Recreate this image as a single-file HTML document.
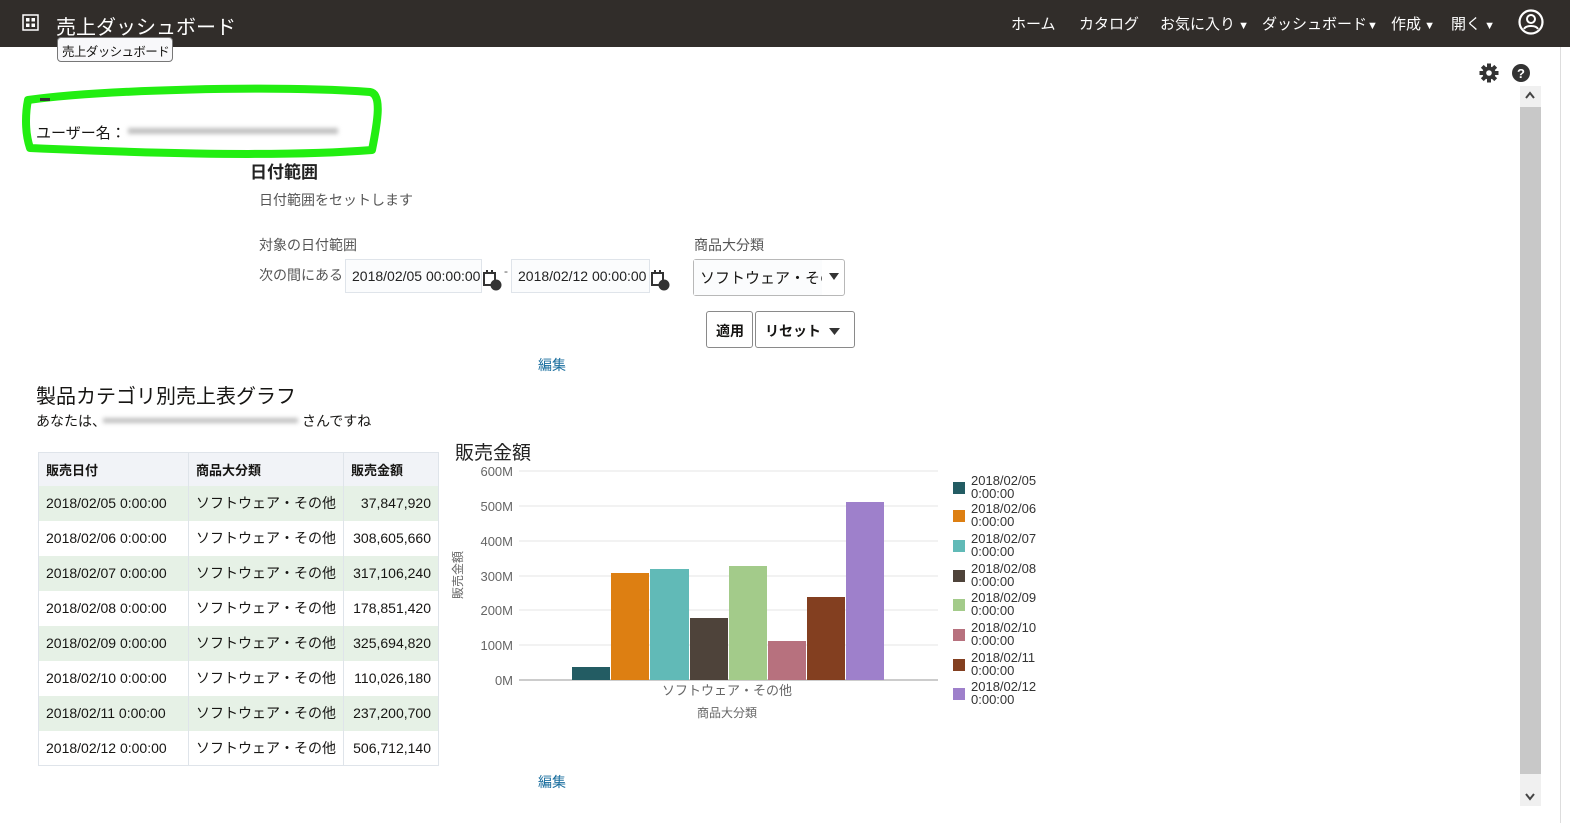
<!DOCTYPE html>
<html><head><meta charset="utf-8"><style>
*{margin:0;padding:0;box-sizing:border-box}
body{width:1570px;height:823px;background:#fff;position:relative;overflow:hidden;font-family:"Liberation Sans","Noto Sans CJK JP",sans-serif;color:#161513}
.a{position:absolute;white-space:nowrap}
.hdr{left:0;top:0;width:1570px;height:47px;background:#312d2a}
.nav{color:#fff;font-size:15px;top:13px}
.lbl{font-size:14px;color:#555}
.inp{border:1px solid #dfe4ea;background:#fbfcfd;height:34px;font-size:14px;padding:8px 6px;overflow:hidden;color:#222}
table{border-collapse:collapse;font-size:14px}
td,th{height:35px;padding:0 7px;border-right:1px solid #dfe4ea;text-align:left;white-space:nowrap}
th{height:33px;background:#f1f3f7;font-weight:bold;font-size:13px}
tr.g td{background:#e6f1e6}
.btn{border:1px solid #8a8a8a;border-radius:3px;background:#fff;font-weight:bold;font-size:14px;height:37px;padding:9px 9px}
</style></head><body>
<div class="a hdr"></div>
<svg class="a" style="left:22px;top:14px" width="17" height="17" viewBox="0 0 17 17"><rect x="1" y="1" width="15" height="15" fill="none" stroke="#fff" stroke-width="1.5"/><rect x="4" y="4" width="3.5" height="3.5" fill="#fff"/><rect x="9.5" y="4" width="3.5" height="3.5" fill="#fff"/><rect x="4" y="9.5" width="3.5" height="3.5" fill="#fff"/><rect x="9.5" y="9.5" width="3.5" height="3.5" fill="#fff"/></svg>
<div class="a" style="left:56px;top:11px;color:#fff;font-size:20px">売上ダッシュボード</div>
<div class="a" style="left:57px;top:37px;border:1px solid #777;border-radius:4px;background:#f8f8fa;font-size:12.5px;letter-spacing:-0.6px;padding:3px 4px;height:25px;width:116px;overflow:hidden">売上ダッシュボード</div>
<div class="a nav" style="left:1011px">ホーム</div>
<div class="a nav" style="left:1079px">カタログ</div>
<div class="a nav" style="left:1160px">お気に入り<span style="font-size:11px"> ▼</span></div>
<div class="a nav" style="left:1262px">ダッシュボード<span style="font-size:11px">▼</span></div>
<div class="a nav" style="left:1391px">作成<span style="font-size:11px"> ▼</span></div>
<div class="a nav" style="left:1451px">開く<span style="font-size:11px"> ▼</span></div>
<svg class="a" style="left:1517px;top:8px" width="28" height="28" viewBox="0 0 28 28"><circle cx="14" cy="14" r="11.5" fill="none" stroke="#fff" stroke-width="2.2"/><circle cx="14" cy="11" r="4" fill="none" stroke="#fff" stroke-width="2"/><path d="M7 21c2-4 12-4 14 0" fill="none" stroke="#fff" stroke-width="2"/></svg>
<div class="a" style="left:1560px;top:47px;width:10px;height:776px;background:#fff;border-left:1px solid #ddd"></div>
<svg class="a" style="left:1479px;top:63px" width="20" height="20" viewBox="0 0 20 20"><g fill="#333"><circle cx="10" cy="10" r="6.5"/><rect x="8" y="0.5" width="4" height="19"/><rect x="0.5" y="8" width="19" height="4"/><rect x="8" y="0.5" width="4" height="19" transform="rotate(45 10 10)"/><rect x="8" y="0.5" width="4" height="19" transform="rotate(-45 10 10)"/></g><circle cx="10" cy="10" r="2.8" fill="#fff"/></svg>
<svg class="a" style="left:1512px;top:64px" width="18" height="18"><circle cx="9" cy="9" r="9" fill="#333"/><text x="9" y="14" font-size="13" font-weight="bold" fill="#fff" text-anchor="middle" font-family="Liberation Sans">?</text></svg>
<div class="a" style="left:1520px;top:86px;width:21px;height:720px;background:#f0f0f0"></div>
<div class="a" style="left:1520px;top:107px;width:21px;height:667px;background:#c8c8c8"></div>
<svg class="a" style="left:1524px;top:90px" width="12" height="10"><path d="M2 8L6 3L10 8" fill="none" stroke="#444" stroke-width="2"/></svg>
<svg class="a" style="left:1524px;top:792px" width="12" height="10"><path d="M2 2L6 7L10 2" fill="none" stroke="#444" stroke-width="2"/></svg>
<svg class="a" style="left:20px;top:80px" width="362" height="82"><path d="M8 20 C80 10 250 5 350 12 C362 14 358 40 352 70 C250 78 100 72 10 68 C4 50 6 30 8 20Z" fill="none" stroke="#22ee11" stroke-width="8" stroke-linejoin="round"/></svg>
<div class="a" style="left:40px;top:98px;width:10px;height:3px;background:#333"></div>
<div class="a" style="left:36px;top:122px;font-size:15px">ユーザー名：</div>
<div class="a" style="left:128px;top:128px;width:210px;height:6px;background:#c0c0c0;filter:blur(2px)"></div>
<div class="a" style="left:250px;top:158px;font-size:17px;font-weight:bold;color:#222">日付範囲</div>
<div class="a lbl" style="left:259px;top:190px">日付範囲をセットします</div>
<div class="a lbl" style="left:259px;top:235px">対象の日付範囲</div>
<div class="a lbl" style="left:259px;top:265px">次の間にある</div>
<div class="a inp" style="left:345px;top:259px;width:137px">2018/02/05 00:00:00</div>
<div class="a inp" style="left:511px;top:259px;width:139px">2018/02/12 00:00:00</div>
<div class="a" style="left:504px;top:264px;font-size:12px;color:#555">-</div>
<svg class="a" style="left:483px;top:270px" width="20" height="22"><rect x="1" y="3" width="11" height="12" fill="none" stroke="#333" stroke-width="2"/><rect x="3" y="0" width="2" height="4" fill="#333"/><rect x="8" y="0" width="2" height="4" fill="#333"/><circle cx="13" cy="15" r="5.5" fill="#333"/></svg>
<svg class="a" style="left:651px;top:270px" width="20" height="22"><rect x="1" y="3" width="11" height="12" fill="none" stroke="#333" stroke-width="2"/><rect x="3" y="0" width="2" height="4" fill="#333"/><rect x="8" y="0" width="2" height="4" fill="#333"/><circle cx="13" cy="15" r="5.5" fill="#333"/></svg>
<div class="a lbl" style="left:694px;top:235px">商品大分類</div>
<div class="a" style="left:693px;top:259px;width:152px;height:37px;border:1px solid #b8b8b8;border-radius:3px;background:#fff"></div>
<div class="a" style="left:694px;top:260px;width:128px;height:35px;background:#fbfcfd;font-size:15px;padding:7px 6px;overflow:hidden">ソフトウェア・その他</div>
<svg class="a" style="left:829px;top:273px" width="10" height="8"><path d="M0 0H10L5 7Z" fill="#333"/></svg>
<div class="a btn" style="left:706px;top:311px;width:47px">適用</div>
<div class="a btn" style="left:755px;top:311px;width:100px">リセット <svg width="11" height="9" style="margin-left:4px"><path d="M0 1H11L5.5 8Z" fill="#333"/></svg></div>
<div class="a" style="left:538px;top:355px;font-size:14px;color:#1a6e9e">編集</div>
<div class="a" style="left:36px;top:380px;font-size:20px">製品カテゴリ別売上表グラフ</div>
<div class="a" style="left:36px;top:411px;font-size:14px">あなたは、</div>
<div class="a" style="left:103px;top:418px;width:195px;height:5px;background:#c0c0c0;filter:blur(2px)"></div>
<div class="a" style="left:302px;top:411px;font-size:14px">さんですね</div>
<table class="a" style="left:38px;top:452px;width:401px;border:1px solid #dfe4ea">
<tr><th style="width:150px">販売日付</th><th style="width:153px">商品大分類</th><th>販売金額</th></tr>
<tr class="g"><td>2018/02/05 0:00:00</td><td>ソフトウェア・その他</td><td style="text-align:right">37,847,920</td></tr>
<tr><td>2018/02/06 0:00:00</td><td>ソフトウェア・その他</td><td style="text-align:right">308,605,660</td></tr>
<tr class="g"><td>2018/02/07 0:00:00</td><td>ソフトウェア・その他</td><td style="text-align:right">317,106,240</td></tr>
<tr><td>2018/02/08 0:00:00</td><td>ソフトウェア・その他</td><td style="text-align:right">178,851,420</td></tr>
<tr class="g"><td>2018/02/09 0:00:00</td><td>ソフトウェア・その他</td><td style="text-align:right">325,694,820</td></tr>
<tr><td>2018/02/10 0:00:00</td><td>ソフトウェア・その他</td><td style="text-align:right">110,026,180</td></tr>
<tr class="g"><td>2018/02/11 0:00:00</td><td>ソフトウェア・その他</td><td style="text-align:right">237,200,700</td></tr>
<tr><td>2018/02/12 0:00:00</td><td>ソフトウェア・その他</td><td style="text-align:right">506,712,140</td></tr>
</table>
<div class="a" style="left:538px;top:772px;font-size:14px;color:#1a6e9e">編集</div>
<svg class="a" style="left:440px;top:440px" width="630" height="290" font-family="Liberation Sans,Noto Sans CJK JP,sans-serif">
<text x="15" y="19" font-size="19" fill="#222">販売金額</text>
<g stroke="#e4e4e4" stroke-width="1"><line x1="79" x2="498" y1="31" y2="31"/><line x1="79" x2="498" y1="66" y2="66"/><line x1="79" x2="498" y1="101" y2="101"/><line x1="79" x2="498" y1="136" y2="136"/><line x1="79" x2="498" y1="170" y2="170"/><line x1="79" x2="498" y1="205" y2="205"/></g>
<line x1="79" x2="498" y1="240" y2="240" stroke="#999"/>
<g font-size="13" fill="#666" text-anchor="end"><text x="73" y="36">600M</text><text x="73" y="71">500M</text><text x="73" y="106">400M</text><text x="73" y="141">300M</text><text x="73" y="175">200M</text><text x="73" y="210">100M</text><text x="73" y="245">0M</text></g>
<text transform="translate(22,135) rotate(-90)" font-size="12" fill="#666" text-anchor="middle">販売金額</text>
<rect x="132" y="227" width="38" height="13" fill="#235c63"/>
<rect x="171" y="133" width="38" height="107" fill="#dd7f12"/>
<rect x="210" y="129" width="39" height="111" fill="#61bab7"/>
<rect x="250" y="178" width="38" height="62" fill="#4e433a"/>
<rect x="289" y="126" width="38" height="114" fill="#a3cb8a"/>
<rect x="328" y="201" width="38" height="39" fill="#b7717e"/>
<rect x="367" y="157" width="38" height="83" fill="#833f20"/>
<rect x="406" y="62" width="38" height="178" fill="#9e80cb"/>
<text x="287" y="255" font-size="13" fill="#666" text-anchor="middle">ソフトウェア・その他</text>
<text x="287" y="277" font-size="12" fill="#666" text-anchor="middle">商品大分類</text>
<g font-size="13" fill="#333">
<rect x="513" y="42" width="12" height="12" fill="#235c63"/><text x="531" y="45">2018/02/05</text><text x="531" y="58">0:00:00</text>
<rect x="513" y="70" width="12" height="12" fill="#dd7f12"/><text x="531" y="73">2018/02/06</text><text x="531" y="86">0:00:00</text>
<rect x="513" y="100" width="12" height="12" fill="#61bab7"/><text x="531" y="103">2018/02/07</text><text x="531" y="116">0:00:00</text>
<rect x="513" y="130" width="12" height="12" fill="#4e433a"/><text x="531" y="133">2018/02/08</text><text x="531" y="146">0:00:00</text>
<rect x="513" y="159" width="12" height="12" fill="#a3cb8a"/><text x="531" y="162">2018/02/09</text><text x="531" y="175">0:00:00</text>
<rect x="513" y="189" width="12" height="12" fill="#b7717e"/><text x="531" y="192">2018/02/10</text><text x="531" y="205">0:00:00</text>
<rect x="513" y="219" width="12" height="12" fill="#833f20"/><text x="531" y="222">2018/02/11</text><text x="531" y="235">0:00:00</text>
<rect x="513" y="248" width="12" height="12" fill="#9e80cb"/><text x="531" y="251">2018/02/12</text><text x="531" y="264">0:00:00</text>
</g>
</svg>
</body></html>
